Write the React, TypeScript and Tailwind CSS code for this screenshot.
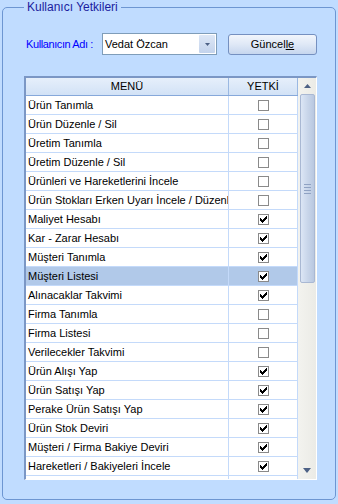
import React from "react";

type Row = { name: string; on: boolean };

const rows: Row[] = [
  { name: "Ürün Tanımla", on: false },
  { name: "Ürün Düzenle / Sil", on: false },
  { name: "Üretim Tanımla", on: false },
  { name: "Üretim Düzenle / Sil", on: false },
  { name: "Ürünleri ve Hareketlerini İncele", on: false },
  { name: "Ürün Stokları Erken Uyarı İncele / Düzenle", on: false },
  { name: "Maliyet Hesabı", on: true },
  { name: "Kar - Zarar Hesabı", on: true },
  { name: "Müşteri Tanımla", on: true },
  { name: "Müşteri Listesi", on: true },
  { name: "Alınacaklar Takvimi", on: true },
  { name: "Firma Tanımla", on: false },
  { name: "Firma Listesi", on: false },
  { name: "Verilecekler Takvimi", on: false },
  { name: "Ürün Alışı Yap", on: true },
  { name: "Ürün Satışı Yap", on: true },
  { name: "Perake Ürün Satışı Yap", on: true },
  { name: "Ürün Stok Deviri", on: true },
  { name: "Müşteri / Firma Bakiye Deviri", on: true },
  { name: "Hareketleri / Bakiyeleri İncele", on: true },
  { name: "", on: false },
];

const SELECTED = 9;

// classic 7x7 pixel check mark
const checkPixels = [
  [6, 0],
  [5, 1], [6, 1],
  [0, 2], [4, 2], [5, 2], [6, 2],
  [0, 3], [1, 3], [3, 3], [4, 3], [5, 3],
  [0, 4], [1, 4], [2, 4], [3, 4], [4, 4],
  [1, 5], [2, 5], [3, 5],
  [2, 6],
];

function CheckBox({ on }: { on: boolean }) {
  return (
    <div className="w-[11px] h-[11px] border border-[#8a8a8a] bg-white flex items-center justify-center">
      {on && (
        <svg width="7" height="7" viewBox="0 0 7 7" shapeRendering="crispEdges">
          {checkPixels.map(([x, y]) => (
            <rect key={`${x}-${y}`} x={x} y={y} width="1" height="1" fill="#000" />
          ))}
        </svg>
      )}
    </div>
  );
}

function ScrollBar() {
  return (
    <div className="w-[18px] h-full flex flex-col items-center bg-gradient-to-r from-[#f3f3ef] to-[#ebebe6]">
      <div className="h-[16px] w-full flex items-center justify-center">
        <svg width="7" height="4" viewBox="0 0 7 4">
          <path d="M0 4 L3.5 0 L7 4 Z" fill="#4d6185" />
        </svg>
      </div>
      <div className="w-[15px] h-[189px] rounded-[2px] border border-[#a9b8d3] bg-gradient-to-r from-[#dce6f5] via-[#c9d6ea] to-[#b9c8e0] flex flex-col items-center justify-center gap-[2px]">
        <div className="w-[7px] h-px bg-[#8fa2c3]" />
        <div className="w-[7px] h-px bg-[#8fa2c3]" />
        <div className="w-[7px] h-px bg-[#8fa2c3]" />
        <div className="w-[7px] h-px bg-[#8fa2c3]" />
      </div>
      <div className="flex-1" />
      <div className="h-[16px] w-full flex items-start justify-center pt-[5px]">
        <svg width="8" height="5" viewBox="0 0 8 5">
          <path d="M0 0 L8 0 L4 5 Z" fill="#4d6185" />
        </svg>
      </div>
    </div>
  );
}

export default function App() {
  return (
    <div
      className="w-[338px] h-[504px] bg-[#c0dcff] overflow-hidden"
      style={{ fontFamily: '"Liberation Sans", Arial, sans-serif' }}
    >
      <fieldset className="ml-[2px] w-[334px] h-[500px] border border-[#6d96d2] rounded-[5px] pl-[21px]">
        <legend className="px-[3px] text-[12px] leading-[14px] text-[#1c1ca0]">
          Kullanıcı Yetkileri
        </legend>

        <div className="mt-[19px] flex items-center h-[22px]">
          <span className="ml-[2px] w-[76px] text-[11px] text-[#0000ff] tracking-[-0.4px]">
            Kullanıcın Adı :
          </span>
          <div className="w-[115px] h-[22px] border border-[#7f9db9] bg-white flex items-center">
            <span className="flex-1 pl-[2px] text-[11px] text-black">Vedat Özcan</span>
            <div className="w-[16px] h-[18px] mr-px rounded-[1px] bg-gradient-to-b from-[#dde7f6] to-[#c3d3ec] flex items-center justify-center">
              <svg width="5" height="3" viewBox="0 0 5 3">
                <path d="M0 0 L5 0 L2.5 3 Z" fill="#4d6185" />
              </svg>
            </div>
          </div>
          <button className="ml-[11px] w-[89px] h-[21px] rounded-[3px] border border-[#7590c0] bg-gradient-to-b from-[#f2f6fc] via-[#dfe8f6] to-[#c6d6ee] text-[11px] text-black">
            Güncel<span className="underline">le</span>
          </button>
        </div>

        <div className="mt-[21px] w-[293px] h-[404px] border-l-2 border-t-2 border-[#7b97c5] border-r border-b border-r-white border-b-white flex overflow-hidden">
          <div className="w-[272px] h-full overflow-hidden bg-white">
            <div className="flex h-[18px] bg-gradient-to-b from-[#e6effb] to-[#d2e2f6] border-b border-[#86a8da] text-[11px] text-black">
              <div className="w-[203px] border-r border-[#9ab8e2] flex items-center justify-center">MENÜ</div>
              <div className="w-[69px] border-r border-[#9ab8e2] flex items-center justify-center">YETKİ</div>
            </div>
            {rows.map((r, i) => (
              <div
                key={i}
                className={`flex h-[19px] border-b border-[#c4dafa] text-[11px] text-black ${
                  i === SELECTED ? "bg-[#b1c9e9]" : "bg-white"
                }`}
              >
                <div className="w-[203px] border-r border-[#c4dafa] pl-[2px] flex items-center overflow-hidden whitespace-nowrap">
                  {r.name}
                </div>
                <div className="w-[69px] border-r border-[#c4dafa] flex items-center justify-center">
                  {r.name && <CheckBox on={r.on} />}
                </div>
              </div>
            ))}
          </div>
          <ScrollBar />
        </div>
      </fieldset>
    </div>
  );
}
